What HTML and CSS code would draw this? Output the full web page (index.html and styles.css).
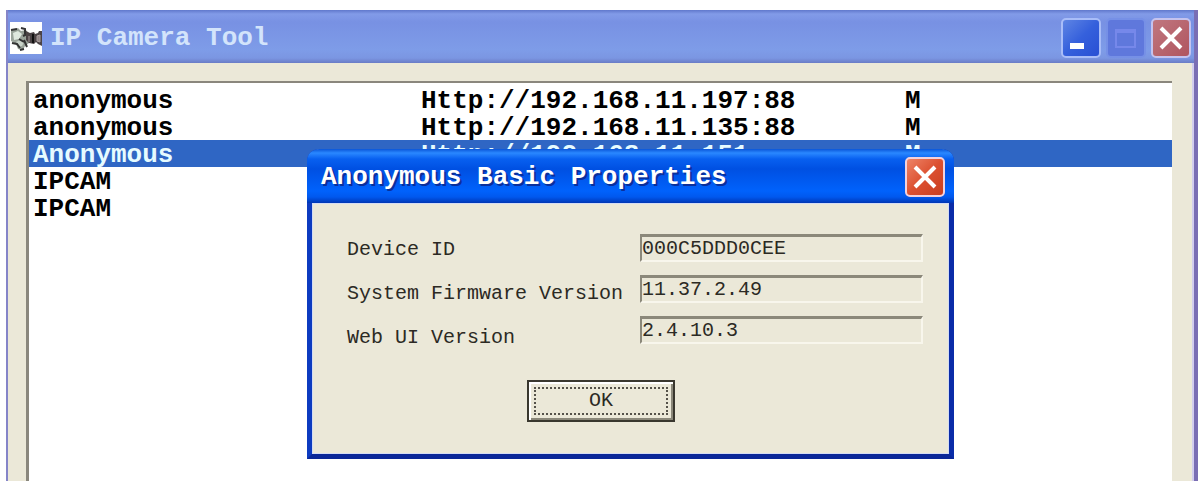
FILE: index.html
```html
<!DOCTYPE html>
<html lang="en">
<head>
    <meta charset="utf-8">
    <title>IP Camera Tool</title>
    <link rel="stylesheet" href="styles.css">
</head>

<body>

    <main class="window">
        <header class="window-title">
            <svg class="app-icon" viewBox="0 0 32 32" aria-hidden="true">
                <rect width="32" height="32" fill="#fff"/>
                <path d="M1 8l7-2 3 3 5-1 3 4v9l-4 3-2 4-5-1-2-5-5-3z" fill="#9aa39a"/>
                <path d="M3 11l5-2 4 3-3 5-5 1z" fill="#dfe8df"/>
                <path d="M6 20l4-2 4 2-2 4-4 1z" fill="#c9d3c9"/>
                <path d="M1 8l6-1M11 6l4 1v5M13 14l4-2M2 21l5 1 3 4M10 28l4-1M14 18l3 7M9 17l5 3" stroke="#333" stroke-width="2" fill="none"/>
                <path d="M16 9l4 2 4-1 1 2 3-1 1-2h3v15l-4-2-2-2-2 2-5-1-3-3z" fill="#4b4345"/>
                <path d="M19 14v6M27 14l3-1v7l-3-1z" stroke="#a99d9d" stroke-width="1" fill="#8f8484"/>
                <path d="M23 12v9" stroke="#111" stroke-width="2"/>
            </svg>
            <h1>IP Camera Tool</h1>
            <div class="window-buttons">
                <button class="title-button minimize" aria-label="Minimize">
                    <svg viewBox="0 0 36 36"><rect x="7" y="23" width="14" height="6" fill="#fff"/></svg>
                </button>
                <button class="title-button maximize" aria-label="Maximize" disabled>
                    <svg viewBox="0 0 36 36"><path d="M8 10h19v17H8zM8 12h19" fill="none" stroke="#7688ea" stroke-width="2"/></svg>
                </button>
                <button class="title-button close" aria-label="Close">
                    <svg viewBox="0 0 36 36"><path d="M8 8l20 20M28 8L8 28" stroke="#fff" stroke-width="4"/></svg>
                </button>
            </div>
        </header>

        <div class="window-body">
            <div class="camera-list">
                <table>
                    <colgroup>
                        <col class="col-name">
                        <col class="col-url">
                        <col>
                    </colgroup>
                    <tr><td>anonymous</td><td>Http://192.168.11.197:88</td><td>M</td></tr>
                    <tr><td>anonymous</td><td>Http://192.168.11.135:88</td><td>M</td></tr>
                    <tr class="selected"><td>Anonymous</td><td>Http://192.168.11.151</td><td>M</td></tr>
                    <tr><td>IPCAM</td><td></td><td></td></tr>
                    <tr><td>IPCAM</td><td></td><td></td></tr>
                </table>
            </div>
        </div>
    </main>

    <section class="dialog" role="dialog" aria-labelledby="dialogTitle">
        <header class="dialog-title">
            <h2 id="dialogTitle">Anonymous Basic Properties</h2>
            <button class="title-button close" aria-label="Close">
                <svg viewBox="0 0 36 36"><path d="M8 8l20 20M28 8L8 28" stroke="#fff" stroke-width="4"/></svg>
            </button>
        </header>
        <form class="dialog-body">
            <div class="properties">
                <div class="labels">
                    <label for="deviceId">Device ID</label>
                    <label for="firmware">System Firmware Version</label>
                    <label for="webUi">Web UI Version</label>
                </div>
                <div class="values">
                    <input type="text" id="deviceId" value="000C5DDD0CEE" readonly>
                    <input type="text" id="firmware" value="11.37.2.49" readonly>
                    <input type="text" id="webUi" value="2.4.10.3" readonly>
                </div>
            </div>
            <button type="button" class="ok-button"><span>OK</span></button>
        </form>
    </section>

</body>
</html>
```
FILE: styles.css
```css
* {
    box-sizing: border-box;
}

body {
    margin: 0;
    padding: 10px 3px 0 6px;
    height: 100vh;
    overflow: hidden;
    background-color: #fff;
    font-family: "Liberation Mono", "Courier New", monospace;
    color: #000;
}

h1, h2 {
    margin: 0;
    font-size: 26px;
    line-height: 32px;
    white-space: nowrap;
}

/* main window */
.window {
    height: 100%;
    display: flex;
    flex-direction: column;
    background-color: #ebe8d8;
    border-left: 2px solid #8585c8;
    border-right: 4px solid #7a6eb4;
}

.window-title {
    display: flex;
    align-items: center;
    gap: 8px;
    height: 53px;
    padding: 2px 3px 0 2px;
    background: linear-gradient(#6078cc 0, #829be8 4px, #7891e3 12px, #7e9ce8 40px, #7b96e2 48px, #6a7cc6 53px);
}

.app-icon {
    width: 32px;
    height: 32px;
}

.window-title h1 {
    flex: 1;
    color: #d3e4fb;
}

.window-buttons {
    display: flex;
    gap: 5px;
}

.title-button {
    width: 40px;
    height: 40px;
    padding: 0;
    border: 2px solid #a9bdf8;
    border-radius: 5px;
}

.title-button svg {
    display: block;
    width: 36px;
    height: 36px;
}

.minimize {
    background: linear-gradient(135deg, #5f85e4, #3560dc 50%, #2950d4);
}

.maximize {
    background-color: #5f78dc;
    border-color: #7690e6;
}

.close {
    background: linear-gradient(135deg, #c0777f, #b0555f);
    border-color: #c5c3ee;
}

.window-body {
    flex: 1;
    padding: 18px 20px 0 18px;
    border-right: 2px solid #d2cdee;
}

.camera-list {
    height: 100%;
    padding-top: 3px;
    background-color: #fff;
    border-top: 2px solid #8a877d;
    border-left: 3px solid #8a877d;
}

.camera-list table {
    width: 100%;
    table-layout: fixed;
    border-collapse: collapse;
    font-size: 26px;
    font-weight: bold;
    line-height: 23px;
}

.camera-list td {
    height: 27px;
    padding: 4px 0 0 4px;
    white-space: nowrap;
}

.col-name {
    width: 388px;
}

.col-url {
    width: 484px;
}

.selected {
    background-color: #2f66c4;
    color: #e6fbff;
}

/* properties dialog */
.dialog {
    position: absolute;
    left: 307px;
    top: 149px;
    width: 647px;
    background-color: #ebe8d8;
    border: 5px solid #0d3bc0;
    border-top: 0;
    border-right-color: #0a2ca8;
    border-bottom-color: #0a2798;
    border-radius: 12px 12px 0 0;
}

.dialog-title {
    display: flex;
    align-items: center;
    justify-content: space-between;
    height: 54px;
    margin: 0 -5px;
    padding: 2px 9px 0 14px;
    background: linear-gradient(#0a55d8 0, #2a88ff 4px, #0860f0 10px, #0050e2 20px, #0062fc 42px, #0058ee 48px, #0036b4 54px);
    border-radius: 12px 12px 0 0;
}

.dialog-title h2 {
    color: #fff;
    text-shadow: 2px 2px 0 #0a2f9c;
}

.dialog-title .close {
    background: linear-gradient(135deg, #ee8468, #dc5030 50%, #c83e20);
    border-color: #f3d2dc;
}

.dialog-body {
    padding: 30px 25px 31px 34px;
    font-size: 20px;
    border: 1px solid #d4dcf4;
}

.properties {
    display: flex;
    justify-content: space-between;
}

.labels, .values {
    display: flex;
    flex-direction: column;
}

.labels {
    gap: 20px;
    padding-top: 4px;
    line-height: 24px;
    color: #2c2a24;
    white-space: nowrap;
}

.values {
    gap: 13px;
    width: 283px;
}

.values input {
    width: 100%;
    height: 28px;
    padding: 0;
    font: inherit;
    color: #2c2a24;
    background-color: transparent;
    border: 2px solid #f8f6ec;
    border-top: 3px solid #8b887a;
    border-left-color: #8b887a;
    outline: none;
}

.ok-button {
    display: block;
    width: 148px;
    height: 42px;
    margin: 30px 0 0 180px;
    padding: 5px;
    font: inherit;
    color: #2c2a24;
    background-color: #ebe8d8;
    border: 2px solid #39372e;
    box-shadow: inset 2px 2px 0 #fff, inset -2px -2px 0 #8b887a;
}

.ok-button span {
    display: block;
    line-height: 24px;
    border: 2px dotted #55524a;
}
```
